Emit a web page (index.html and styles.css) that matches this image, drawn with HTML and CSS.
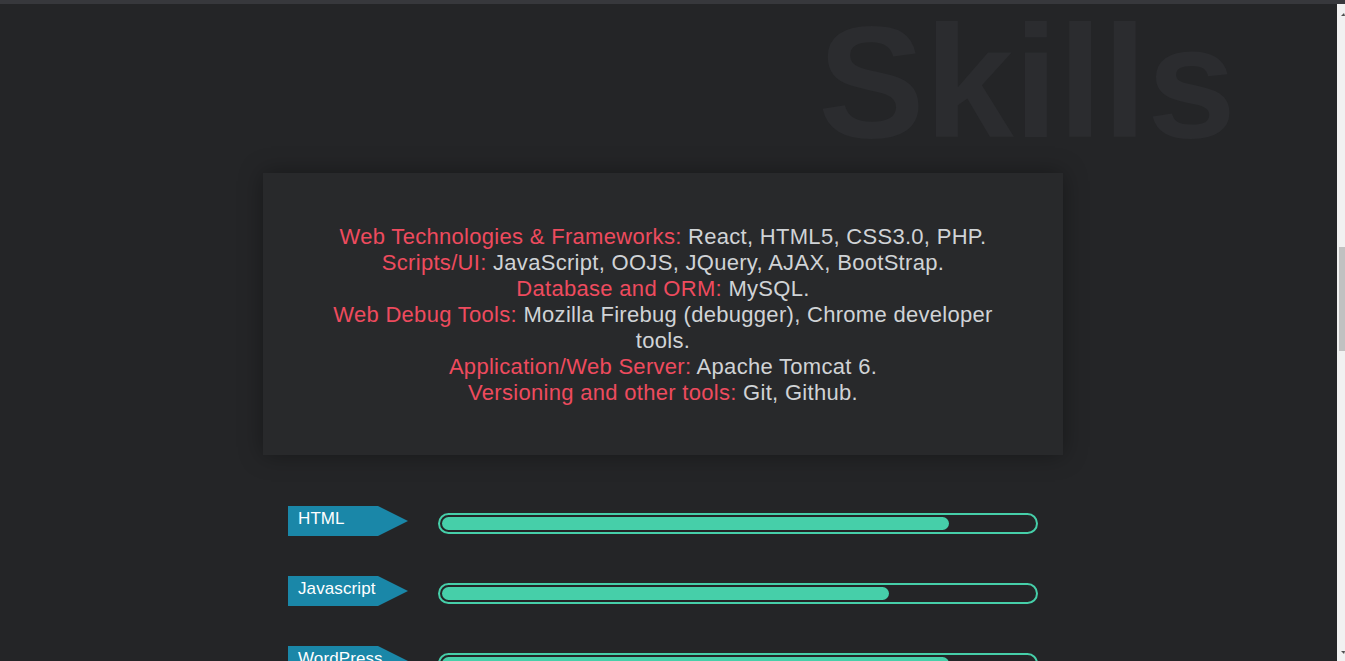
FILE: index.html
```html
<!DOCTYPE html>
<html lang="en">
<head>
<meta charset="utf-8">
<title>Skills</title>
<link rel="stylesheet" href="styles.css">
</head>
<body>
  <div class="topbar"></div>
  <div class="viewport">
    <main class="page">
      <h1 class="ghost-title">Skills</h1>
      <section class="skills">
        <div class="card">
          <p class="line"><span class="key">Web Technologies &amp; Frameworks:</span> React, HTML5, CSS3.0, PHP.</p>
          <p class="line"><span class="key">Scripts/UI:</span> JavaScript, OOJS, JQuery, AJAX, BootStrap.</p>
          <p class="line"><span class="key">Database and ORM:</span> MySQL.</p>
          <p class="line"><span class="key">Web Debug Tools:</span> Mozilla Firebug (debugger), Chrome developer tools.</p>
          <p class="line"><span class="key">Application/Web Server:</span> Apache Tomcat 6.</p>
          <p class="line"><span class="key">Versioning and other tools:</span> Git, Github.</p>
        </div>
        <div class="bars">
          <div class="bar-row">
            <div class="tag">HTML</div>
            <div class="track"><div class="fill" style="width:85%"></div></div>
          </div>
          <div class="bar-row">
            <div class="tag">Javascript</div>
            <div class="track"><div class="fill" style="width:75%"></div></div>
          </div>
          <div class="bar-row">
            <div class="tag">WordPress</div>
            <div class="track"><div class="fill" style="width:85%"></div></div>
          </div>
          <div class="bar-row">
            <div class="tag">CSS</div>
            <div class="track"><div class="fill" style="width:80%"></div></div>
          </div>
        </div>
      </section>
    </main>
    <div class="scrollbar">
      <div class="arrow-up"></div>
      <div class="thumb"></div>
      <div class="spacer"></div>
      <div class="arrow-down"></div>
    </div>
  </div>
</body>
</html>
```
FILE: styles.css
```css
html, body {
  margin: 0;
  height: 100%;
  overflow: hidden;
  background: #242527;
}
body {
  font-family: "Liberation Sans", Arial, sans-serif;
  display: flex;
  flex-direction: column;
}
.topbar {
  height: 4px;
  flex: none;
  background: #37383c;
}
.viewport {
  flex: 1;
  min-height: 0;
  display: flex;
}
.page {
  flex: 1;
  min-width: 0;
  overflow: hidden;
  padding-right: 11px;
}
.ghost-title {
  margin: 0;
  font-size: 160px;
  line-height: 155px;
  font-weight: 700;
  color: #2b2c2f;
  text-align: right;
  padding-right: 90px;
}
.skills {
  width: 800px;
  margin: 14px auto 0;
}
.card {
  background: #28292b;
  box-shadow: 0 0 22px rgba(0, 0, 0, 0.35);
  padding: 51px 62px 49px;
  text-align: center;
  font-size: 22px;
  letter-spacing: 0.3px;
  line-height: 26px;
  color: #d0d3d6;
}
.line {
  margin: 0;
}
.key {
  color: #ee4b5e;
}
.bars {
  padding: 51px 25px 0;
}
.bar-row {
  display: flex;
  gap: 30px;
  height: 30px;
  margin-bottom: 40px;
}
.tag {
  flex: none;
  width: 120px;
  height: 30px;
  box-sizing: border-box;
  padding-left: 10px;
  background: #1a87a8;
  clip-path: polygon(0 0, 90px 0, 120px 15px, 90px 30px, 0 30px);
  color: #ffffff;
  font-size: 17px;
  letter-spacing: 0.1px;
  line-height: 26px;
}
.track {
  flex: none;
  width: 600px;
  height: 21px;
  box-sizing: border-box;
  margin-top: 7px;
  border: 2px solid #46cfa9;
  border-radius: 11px;
}
.fill {
  height: 13px;
  margin: 2px;
  background: #46cfa9;
  border-radius: 7px;
}
.scrollbar {
  flex: none;
  width: 8px;
  background: #f1f1f1;
  display: flex;
  flex-direction: column;
  align-items: flex-end;
}
.arrow-up {
  margin-top: 9px;
  width: 0;
  height: 0;
  border-left: 3px solid transparent;
  border-right: 1px solid transparent;
  border-bottom: 3px solid #505050;
}
.thumb {
  margin-top: 231px;
  width: 6px;
  height: 104px;
  background: #c1c1c1;
}
.spacer {
  flex: 1;
}
.arrow-down {
  margin-bottom: 7px;
  width: 0;
  height: 0;
  border-left: 3px solid transparent;
  border-right: 1px solid transparent;
  border-top: 3px solid #505050;
}
```
